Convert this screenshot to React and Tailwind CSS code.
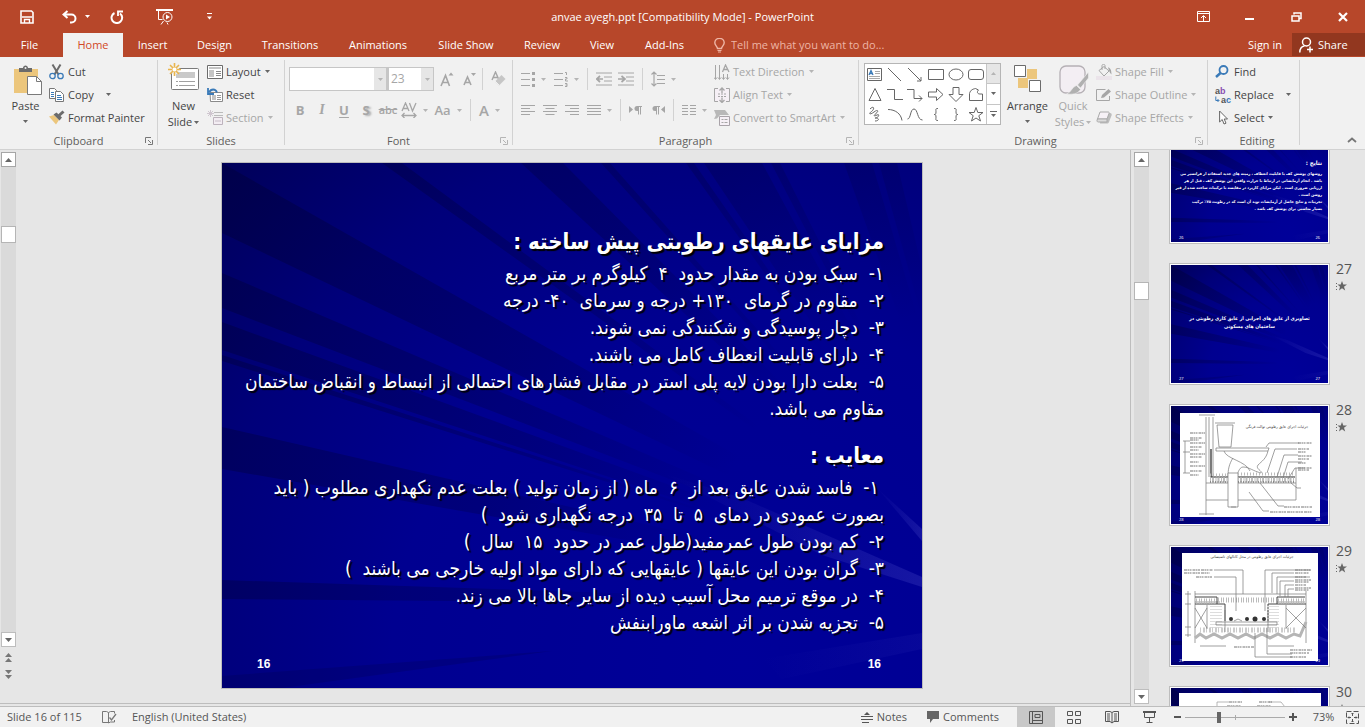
import { useId } from "react";
import { clsx } from "clsx";

const UI_FONT = "font-['Open_Sans','Noto_Sans',sans-serif]";
const FA_FONT = "font-['DejaVu_Sans_Condensed','DejaVu_Sans',sans-serif]";

function Svg({ w, h, className, children }) {
  return (
    <svg width={w} height={h} viewBox={`0 0 ${w} ${h}`} fill="none" stroke="currentColor" aria-hidden="true" className={clsx("shrink-0", className)}>
      {children}
    </svg>
  );
}

function Caret({ className }) {
  return (
    <Svg w={5} h={3} className={className}>
      <path d="M0 0h5L2.5 3z" fill="currentColor" stroke="none" />
    </Svg>
  );
}

/* ---------- title bar icons ---------- */

const SaveIcon = () => (
  <Svg w={14} h={14}>
    <path d="M1 1h10.5L13 2.500V13H1z" strokeWidth="1.600" />
    <path d="M2 7h10M4.500 13v-3.500h5V13" strokeWidth="1.400" />
  </Svg>
);
const UndoIcon = () => (
  <Svg w={15} h={14}>
    <path d="M5.500 1L1.500 4.500l4 3.500M2 4.500h7.500a4 4 0 0 1 0 8H8" strokeWidth="2" />
  </Svg>
);
const RedoIcon = () => (
  <Svg w={14} h={14}>
    <path d="M4.500 3A5.300 5.300 0 1 0 10 3.500" strokeWidth="2" />
    <path d="M8 6V1.500h5" strokeWidth="1.800" />
  </Svg>
);
const SlideshowIcon = () => (
  <Svg w={17} h={16}>
    <path d="M0 1h17" strokeWidth="2" />
    <path d="M2.500 2v8.500h4M5 15.500l2.500-3.500M12 15.500l-1-2" />
    <circle cx="11.500" cy="8" r="4.500" />
    <path d="M10 5.500v5L14 8z" fill="currentColor" stroke="none" />
  </Svg>
);
const CustomizeIcon = () => (
  <Svg w={5} h={7}>
    <path d="M0 .5h5" />
    <path d="M0 3.500h5L2.500 6.500z" fill="currentColor" stroke="none" />
  </Svg>
);
const RibbonOptionsIcon = () => (
  <Svg w={13} h={11}>
    <path d="M.5 .5h12v10H.5zM1 2.500h11M6.500 10V5M4 7l2.500-2.500L9 7" />
  </Svg>
);
const MinimizeIcon = () => (
  <Svg w={9} h={10}>
    <path d="M0 7h9" strokeWidth="2" />
  </Svg>
);
const RestoreIcon = () => (
  <Svg w={11} h={10}>
    <path d="M3 2.500V1h7v5.500H8.500M1 4h7v5H1z" strokeWidth="1.500" />
  </Svg>
);
const CloseIcon = () => (
  <Svg w={10} h={10}>
    <path d="M1 1l8 8M9 1L1 9" strokeWidth="2.200" />
  </Svg>
);
const BulbIcon = () => (
  <Svg w={11} h={15}>
    <path d="M3.500 10.500c0-2-2.700-3-2.700-5.700a4.700 4.500 0 0 1 9.400 0c0 2.700-2.700 3.700-2.700 5.700z" strokeWidth="1.400" />
    <path d="M3.500 12.500h4M4 14h3" strokeWidth="1.200" />
  </Svg>
);
const PersonIcon = () => (
  <Svg w={15} h={16}>
    <circle cx="7.500" cy="5" r="4" strokeWidth="1.500" />
    <path d="M.8 15.500c0-3.500 1.700-6 4.700-6.500M11 9.500v6M8 12.500h6" strokeWidth="1.500" />
  </Svg>
);

/* ---------- clipboard and slides icons ---------- */

const PasteIcon = () => (
  <Svg w={29} h={31}>
    <path d="M1 4h24v24H1z" fill="#ecc67c" stroke="none" />
    <path d="M6 7V3h4c0-3.500 5-3.500 5 0h4v4z" fill="#6b6b6b" stroke="none" />
    <circle cx="12.500" cy="3" r="1" fill="#f1f1f1" stroke="none" />
    <path d="M14.500 11.500h9l5 5v13h-14z" fill="#fff" stroke="#7a7a7a" />
    <path d="M23.500 11.500v5h5" stroke="#7a7a7a" />
  </Svg>
);
const CutIcon = () => (
  <Svg w={15} h={16}>
    <path d="M3.500 .5l6 10M11.500 .5l-6 10" stroke="#6b6b6b" strokeWidth="2" />
    <circle cx="3.500" cy="12" r="2.700" stroke="#3a7ab8" strokeWidth="1.300" />
    <circle cx="11.500" cy="12" r="2.700" stroke="#3a7ab8" strokeWidth="1.300" />
  </Svg>
);
const CopyIcon = () => (
  <Svg w={15} h={14}>
    <path d="M.5 .5h5l2 2v8h-7z" fill="#fff" stroke="#777" />
    <path d="M2 4.500h3M2 6.500h3M2 8.500h3" stroke="#3a7ab8" />
    <path d="M6.500 3.500h5l3 3v7h-8z" fill="#fff" stroke="#777" />
    <path d="M8 7.500h4M8 9.500h5M8 11.500h5" stroke="#3a7ab8" />
  </Svg>
);
const PainterIcon = () => (
  <Svg w={16} h={15}>
    <path d="M0 6.500l5-1.500 5 5-3 4.500z" fill="#ecc67c" stroke="none" />
    <path d="M4.500 4.500l3-2 5.500 5-2.500 3z" fill="#6b6b6b" stroke="none" />
    <path d="M10 5.500l4.500-4" stroke="#6b6b6b" strokeWidth="3" />
  </Svg>
);
const NewSlideIcon = () => (
  <Svg w={31} h={28}>
    <rect x="3.500" y="5.500" width="27" height="21" rx="1" fill="#fff" stroke="#7a7a7a" />
    <path d="M8 9h19v6H8z" fill="#c9c9c9" stroke="none" />
    <path d="M8 18.500h2M11 18.500h16M8 22.500h2M11 22.500h16" stroke="#a0a0a0" />
    <circle cx="6.500" cy="6.500" r="5" fill="#f1f1f1" stroke="none" />
    <path d="M6.500 0v13M0 6.500h13M2 2l9 9M11 2l-9 9" stroke="#e9b54d" strokeWidth="1.600" />
    <circle cx="6.500" cy="6.500" r="2" fill="#fff" stroke="none" />
  </Svg>
);
const LayoutIcon = () => (
  <Svg w={16} h={14}>
    <path d="M.5 .5h15v13H.5z" fill="#fff" stroke="#6b6b6b" />
    <path d="M2 2h12v2H2zM2 5h5v7H2z" fill="#c4c4c4" stroke="none" />
    <path d="M9 6.500h5M9 8.500h5M9 10.500h5" stroke="#888" />
  </Svg>
);
const ResetIcon = () => (
  <Svg w={16} h={14}>
    <path d="M3 4.500h12.500v9h-12z" fill="#fff" stroke="#8a8a8a" />
    <path d="M5 7h4v5H5z" fill="#c4c4c4" stroke="none" />
    <path d="M10 7.500h4M10 9.500h4M10 11.500h4" stroke="#999" />
    <path d="M10 4.500C8.500 .5 4 .5 2 4.500M1 0v6h6" stroke="#3a7ab8" strokeWidth="1.800" />
  </Svg>
);
const SectionIcon = () => (
  <Svg w={16} h={16}>
    <path d="M3.500 0v7M0 3.500h7M1 1l5 5M6 1L1 6" stroke="#cfc6cf" />
    <path d="M7 2.500h9M7 5.500h9" stroke="#bbb" />
    <path d="M6.500 7.500h9v7h-9z" fill="#f3edf3" stroke="#bdb3bd" />
    <path d="M8 11h6" stroke="#c7bdc7" />
  </Svg>
);

/* ---------- font and paragraph icons, all disabled ---------- */

const GrowFontIcon = () => (
  <Svg w={14} h={15}>
    <path d="M1 14L5.500 3.500 9.500 14M2.500 10.500h6" strokeWidth="1.600" />
    <path d="M8.500 3.500h5L11 .5z" fill="currentColor" stroke="none" />
  </Svg>
);
const ShrinkFontIcon = () => (
  <Svg w={13} h={14}>
    <path d="M1 13L4.500 5 8 13M2 10.500h5" strokeWidth="1.600" />
    <path d="M8 1h5l-2.500 3z" fill="currentColor" stroke="none" />
  </Svg>
);
const ClearFormatIcon = () => (
  <Svg w={15} h={16}>
    <path d="M1 9L4.500 1 8 9M2.500 6.500h4" strokeWidth="1.400" />
    <path d="M4 10.500L10.500 4l4 4L8 14.500z" fill="#c6c6c6" stroke="none" />
    <path d="M4 10l4.500 4.500" stroke="#f1f1f1" />
  </Svg>
);
const SpacingIcon = () => (
  <Svg w={16} h={16}>
    <path d="M1 9L4.500 1 8 9M2.500 6.500h4M8.500 1L11.500 9 15 1M.8 13.500h14.400M3.500 11L1 13.500 3.500 16M12.500 11l2.500 2.500-2.500 2.500" strokeWidth="1.300" />
  </Svg>
);
const BulletsIcon = () => (
  <Svg w={14} h={16}>
    <path d="M0 2.500h9M0 8.500h9M0 14.500h9" />
    <path d="M11 1h3v3h-3zM11 7h3v3h-3zM11 13h3v3h-3z" fill="currentColor" stroke="none" />
  </Svg>
);
const NumberingIcon = () => (
  <Svg w={14} h={16}>
    <path d="M0 2.500h9M0 8.500h9M0 14.500h9M11 1.500h1.500V4M11 6.500h2v1.500h-1.500v2H14M11 12.500h2v3h-2M11.500 14H13" />
  </Svg>
);
const OutdentIcon = ({ flip }) => (
  <Svg w={16} h={14}>
    <path d="M0 1h16M0 13h16M8 5h8M8 9h8" />
    <path d={flip ? "M0 7h6M3.500 4L7 7l-3.500 3" : "M7 7H1M4 4L.7 7 4 10"} strokeWidth="1.700" />
  </Svg>
);
const LineSpacingIcon = () => (
  <Svg w={14} h={16}>
    <path d="M6 4.500h8M6 8.500h8M6 12.500h8M3 1v14M.5 3.500L3 1l2.500 2.500M.5 12.500L3 15l2.500-2.500" strokeWidth="1.200" />
  </Svg>
);
const ALIGN_PATHS = {
  left: "M0 .5h14M0 3.500h9M0 6.500h14M0 9.500h9",
  center: "M0 .5h14M2.500 3.500h9M0 6.500h14M2.500 9.500h9",
  right: "M0 .5h14M5 3.500h9M0 6.500h14M5 9.500h9",
  justify: "M0 .5h14M0 3.500h14M0 6.500h14M0 9.500h14",
  columns: "M0 .5h6M8 .5h6M0 3.500h6M8 3.500h6M0 6.500h6M8 6.500h6M0 9.500h6M8 9.500h6",
};
const AlignIcon = ({ type }) => (
  <Svg w={14} h={10}>
    <path d={ALIGN_PATHS[type]} />
  </Svg>
);
const DirectionIcon = ({ rtl }) => (
  <Svg w={13} h={9}>
    <path d={rtl ? "M13 0v7L9 3.500z" : "M0 0v7l4-3.500z"} fill="currentColor" stroke="none" />
    <g transform={rtl ? "translate(-5 0)" : undefined}>
      <path d="M9.500 .5v8M11.500 .5v8M8 .5h5" />
      <path d="M9.500 0H8a2 2 0 0 0 0 5h1.500z" fill="currentColor" stroke="none" />
    </g>
  </Svg>
);
const TextDirectionIcon = () => (
  <Svg w={16} h={16}>
    <path d="M1.500 1v14M5.500 1v14M9.500 10v5M13.500 10v5M0 13.500L1.500 15.500 3 13.500M4 13.500l1.500 2 1.500-2M8 13.500l1.500 2 1.500-2M12 13.500l1.500 2 1.500-2" />
    <path d="M8.500 8L11.500 1l3.500 7M9.500 5.500h4" strokeWidth="1.300" />
  </Svg>
);
const AlignTextIcon = () => (
  <Svg w={16} h={16}>
    <path d="M.5 1.500h15v13H.5z" fill="#f6f0f6" stroke="none" />
    <path d="M4 1.500H.5v13H4M12 1.500h3.500v13H12" />
    <path d="M4 7h8M4 9.500h8" strokeDasharray="2 1" />
    <path d="M8 1v5M5.500 3.500L8 1l2.500 2.500M8 10.500v5M5.500 13L8 15.500l2.500-2.500" strokeWidth="1.300" />
  </Svg>
);
const SmartArtIcon = () => (
  <Svg w={16} h={16}>
    <path d="M0 0h11l4 5H6L3 8.500 0 9l2-4z" fill="#b8b8b8" stroke="none" />
    <path d="M5.500 6.500h10v9h-10z" fill="#f6f0f6" stroke="#a9a3a9" />
    <path d="M7.500 9.500h2M10.500 9.500h3M7.500 12.500h2M10.500 12.500h3" />
  </Svg>
);

/* ---------- drawing and editing icons ---------- */

const ArrangeIcon = () => (
  <Svg w={28} h={27}>
    <path d="M13 4h10v10H13zM4 13h10v10H4z" fill="#ecc67c" stroke="none" />
    <path d="M.5 .5h11v11H.5zM15.500 15.500h11v11h-11z" fill="#fff" stroke="#6b6b6b" />
  </Svg>
);
const QuickStylesIcon = () => (
  <Svg w={30} h={31}>
    <rect x="1" y="1" width="25" height="27" rx="6" fill="#f3eef3" stroke="#b5b0b5" strokeWidth="1.300" />
    <path d="M29.500 7v6l-8 10-3-3z" fill="#b0b0b0" stroke="#f1f1f1" strokeWidth=".6" />
    <path d="M17.500 20.500l4 4c-3 5-9 5-14 4.500 5-1.500 5-7 10-8.500z" fill="#b0b0b0" stroke="#f1f1f1" strokeWidth=".6" />
  </Svg>
);
const FillIcon = () => (
  <Svg w={16} h={16}>
    <path d="M0 12h16v4H0z" fill="#ebe4ea" stroke="none" />
    <path d="M3 6.500l5-4 5 4.500-5 5zM6 6V1.500C6 0 9 0 9 1.500V5" />
    <path d="M12 3.500c2 0 3.500 2 3.500 7-1.500-1-2-3-2.500-4z" fill="currentColor" stroke="none" />
  </Svg>
);
const OutlineIcon = () => (
  <Svg w={16} h={12}>
    <path d="M13.500 7v4.500H.5V.5h9" />
    <path d="M5 9l1-3 6.500-6 2.500 2.500L8 8.500z" fill="currentColor" stroke="none" />
  </Svg>
);
const EffectsIcon = () => (
  <Svg w={16} h={13}>
    <path d="M5 2h9c1.500 0 2 1 1.500 2.500L13 11c-.5 1-1 1.500-2 1.500H4z" fill="#bcbcbc" stroke="none" />
    <path d="M4 1h8c1 0 1.500.5 1 1.500L11 8H1.500z" fill="#f6f1f6" stroke="#a9a9a9" />
    <path d="M1.500 8H11v3H2.500C1 11 .5 10 1.500 8z" fill="#dcdcdc" stroke="#a9a9a9" />
  </Svg>
);
const FindIcon = () => (
  <Svg w={14} h={13}>
    <circle cx="8.500" cy="5" r="4" stroke="#3a7ab8" strokeWidth="1.800" />
    <path d="M5.500 8L1 12" stroke="#3a7ab8" strokeWidth="2.500" />
  </Svg>
);
const ReplaceIcon = () => (
  <Svg w={17} h={18} className="overflow-visible">
    <g stroke="none" className="font-['Liberation_Sans',sans-serif] text-[9px] font-bold" fill="#555">
      <text x="0" y="8">a<tspan fill="#8a4fb0">b</tspan></text>
      <text x="6" y="17">a<tspan fill="#3a7ab8">c</tspan></text>
    </g>
    <path d="M.8 10.500v4h3M2.500 13l1.500 1.500L2.500 16" stroke="#3a7ab8" />
  </Svg>
);
const SelectIcon = () => (
  <Svg w={9} h={15}>
    <path d="M.6 1v11l2.600-2.500L5 14l2-.8-1.800-4.200h3.300z" fill="#fff" stroke="#666" />
  </Svg>
);

const SHAPES = [
  { name: "Text box", el: <><path d="M.5 2.500h14v12H.5z" fill="#fff" /><path d="M2 9L4 4.500 6 9M2.500 7.500h3" stroke="#3a7ab8" strokeWidth="1.300" /><path d="M8 5.500h5M8 7.500h5M2 10.500h11M2 12.500h11" stroke="#aaa" /></> },
  { name: "Line", el: <path d="M1 2l13 13" /> },
  { name: "Arrow", el: <path d="M1 2l13 13M14 11v4h-4" /> },
  { name: "Rectangle", el: <path d="M.5 3.500h15v10H.5z" /> },
  { name: "Oval", el: <ellipse cx="8" cy="8.500" rx="7" ry="5.500" /> },
  { name: "Rounded rectangle", el: <rect x=".5" y="3.500" width="15" height="10" rx="2.500" /> },
  { name: "Triangle", el: <path d="M8 2.500L14 14.500H2z" /> },
  { name: "Elbow connector", el: <path d="M0 3.500h7.500v10H16" /> },
  { name: "Elbow arrow", el: <path d="M0 3.500h7v9h8M12 9.500l3 3-3 3" /> },
  { name: "Right arrow", el: <path d="M.5 6h8V2.500L15 8.500l-6.500 6V11h-8z" /> },
  { name: "Down arrow", el: <path d="M5 1.500h6v7h4L8 15.500 1 8.500h4z" /> },
  { name: "Freeform", el: <path d="M1.500 14.500v-7c1-4 4-4.500 6-5l3 1.500c-2 2-1 4 1.500 4h2.500v6.500z" /> },
  { name: "Scribble", el: <path d="M3 3c4-4 5 0 1.500 2.500S3 9 7 6s5-1 2 1.500-2 3 1 1.500 1.500 2-.5 3-2-1 .5 0 1.500 3-2 3" /> },
  { name: "Arc", el: <path d="M1 3.500c7 0 13 4 14 11" /> },
  { name: "Curve", el: <path d="M.5 13C4 13 3 3 7 3s3 11 8.500 11" /> },
  { name: "Left brace", el: <path d="M10 2.500c-3 0-2 1-2 3.500s-1 2.500-2 2.500c1 0 2 0 2 2.500s-1 3.500 2 3.500" /> },
  { name: "Right brace", el: <path d="M6 2.500c3 0 2 1 2 3.500s1 2.500 2 2.500c-1 0-2 0-2 2.500s1 3.500-2 3.500" /> },
  { name: "Star", el: <path d="M8 1.500l1.800 5H15l-4.200 3.200 1.700 5.300L8 12l-4.500 3 1.700-5.300L1 6.500h5.200z" /> },
];

/* ---------- ribbon parts ---------- */

function Group({ label, launcher, muted, className, children }) {
  return (
    <section aria-label={label} className={clsx("mt-[3px] mb-1 flex shrink-0 flex-col border-r border-[#d2d2d2]", className)}>
      <div className="flex h-[73px] shrink-0">{children}</div>
      <div className="flex h-4 items-center leading-4">
        <span className="w-3" />
        <span className="flex-1 text-center text-[#605e5c]">{label}</span>
        <span className="flex w-3 items-center">
          {launcher && (
            <button aria-label={`${label} settings`} className={muted ? "text-[#b5b5b5]" : "text-[#777]"}>
              <Svg w={8} h={8}>
                <path d="M.5 6V.5H6M3 3l3 3M7.500 3v4.500H3" />
              </Svg>
            </button>
          )}
        </span>
      </div>
    </section>
  );
}

function SmallButton({ icon, label, caret, wide, disabled }) {
  return (
    <button disabled={disabled} className={clsx("flex h-[23px] items-center whitespace-nowrap", disabled ? "text-[#a6a6a6]" : "text-[#444]")}>
      <span className="flex w-[19px] items-center">{icon}</span>
      {label}
      {caret && <Caret className={clsx(wide ? "ml-3" : "ml-1", disabled ? "text-[#b5b5b5]" : "text-[#666]")} />}
    </button>
  );
}

function IconButton({ label, className, caret, children }) {
  return (
    <button disabled aria-label={label} className={clsx("flex h-6 items-center justify-center text-[#a6a6a6]", className)}>
      {children}
      {caret && <Caret className="ml-1.5 text-[#b5b5b5]" />}
    </button>
  );
}

const Divider = ({ className }) => <span className={clsx("h-[22px] w-px bg-[#d2d2d2]", className)} />;

function Combo({ label, value, className }) {
  return (
    <div className={clsx("flex h-6 border border-[#c6c6c6] bg-white text-[#a6a6a6]", className)}>
      <select aria-label={label} disabled defaultValue={value} className="min-w-0 flex-1 appearance-none bg-white pl-0.5 text-[12px] opacity-100 outline-none">
        <option value={value}>{value}</option>
      </select>
      <span className="flex w-3 items-center justify-center bg-[#e6e6e6] text-[#b5b5b5]">
        <Caret />
      </span>
    </div>
  );
}

function ShapeGallery() {
  return (
    <div className="mt-[3px] flex h-[62px] w-[137px] border border-[#b5b5b5] bg-white">
      <div className="grid flex-1 grid-cols-6 grid-rows-3 text-[#666]">
        {SHAPES.map(s => (
          <button key={s.name} aria-label={s.name} className="flex items-center justify-center">
            <Svg w={16} h={16}>{s.el}</Svg>
          </button>
        ))}
      </div>
      <div className="flex w-3.5 flex-col divide-y divide-[#c6c6c6] border-l border-[#c6c6c6]">
        <button aria-label="Previous shapes" className="flex flex-1 items-center justify-center bg-[#e6e6e6] text-[#b5b5b5]">
          <Caret className="rotate-180" />
        </button>
        <button aria-label="Next shapes" className="flex flex-1 items-center justify-center text-[#666]">
          <Caret />
        </button>
        <button aria-label="More shapes" className="flex flex-1 items-center justify-center text-[#666]">
          <Svg w={7} h={7}>
            <path d="M0 .5h7" />
            <path d="M1 3h5L3.500 6z" fill="currentColor" stroke="none" />
          </Svg>
        </button>
      </div>
    </div>
  );
}

function Ribbon() {
  return (
    <div className="flex h-[93px] shrink-0 border-b border-[#d2d2d2] bg-[#f1f1f1]">
      <Group label="Clipboard" launcher className="w-[158px]">
        <button className="ml-0.5 flex w-[47px] flex-col items-center justify-start pt-[5px] text-[#444]">
          <span className="ml-1"><PasteIcon /></span>
          <span className="mt-0.5 leading-4">Paste</span>
          <Caret className="mt-1.5 text-[#666]" />
        </button>
        <div className="flex flex-col">
          <SmallButton icon={<CutIcon />} label="Cut" />
          <SmallButton icon={<CopyIcon />} label="Copy" caret wide />
          <SmallButton icon={<PainterIcon />} label="Format Painter" />
        </div>
      </Group>

      <Group label="Slides" className="w-[127px]">
        <button className="ml-0.5 flex w-[47px] flex-col items-center justify-start pt-[3px] text-[#444]">
          <NewSlideIcon />
          <span className="mt-[7px] leading-4">New</span>
          <span className="flex items-center gap-0.5 leading-4">Slide<Caret className="text-[#666]" /></span>
        </button>
        <div className="flex flex-col">
          <SmallButton icon={<LayoutIcon />} label="Layout" caret />
          <SmallButton icon={<ResetIcon />} label="Reset" />
          <SmallButton icon={<SectionIcon />} label="Section" caret disabled />
        </div>
      </Group>

      <Group label="Font" launcher muted className="w-[228px]">
        <div className="flex flex-col gap-[7px] pt-[7px] pl-1">
          <div className="flex items-center">
            <Combo label="Font name" value="" className="w-[98px]" />
            <Combo label="Font size" value="23" className="w-[47px] border-l-2" />
            <IconButton label="Increase font size" className="ml-0.5 w-[22px]"><GrowFontIcon /></IconButton>
            <IconButton label="Decrease font size" className="w-[22px]"><ShrinkFontIcon /></IconButton>
            <Divider className="mx-0.5" />
            <IconButton label="Clear formatting" className="ml-0.5 w-[22px]"><ClearFormatIcon /></IconButton>
          </div>
          <div className="flex items-center">
            <IconButton label="Bold" className="w-[22px] text-[13px] font-bold">B</IconButton>
            <IconButton label="Italic" className="w-[22px] font-['Liberation_Serif',serif] text-[14px] font-bold italic">I</IconButton>
            <IconButton label="Underline" className="w-[22px] text-[13px] font-bold underline underline-offset-2">U</IconButton>
            <IconButton label="Shadow" className="w-[22px] text-[13px] font-bold [text-shadow:2px_1px_2px_#aaa]">S</IconButton>
            <IconButton label="Strikethrough" className="w-[22px] font-semibold line-through">abc</IconButton>
            <IconButton label="Character spacing" caret className="w-[31px]"><SpacingIcon /></IconButton>
            <IconButton label="Change case" caret className="w-9 text-[13px] font-semibold">Aa</IconButton>
            <Divider className="mx-1" />
            <IconButton label="Font color" caret className="w-[29px] text-[15px] font-semibold">A</IconButton>
          </div>
        </div>
      </Group>

      <Group label="Paragraph" launcher muted className="w-[346px]">
        <div className="flex w-[201px] flex-col gap-[7px] pt-[7px] pl-2">
          <div className="flex items-center">
            <IconButton label="Bullets" caret><BulletsIcon /></IconButton>
            <IconButton label="Numbering" caret className="ml-2"><NumberingIcon /></IconButton>
            <Divider className="mx-2" />
            <IconButton label="Decrease indent"><OutdentIcon /></IconButton>
            <IconButton label="Increase indent" className="ml-1.5"><OutdentIcon flip /></IconButton>
            <Divider className="mx-2" />
            <IconButton label="Line spacing" caret><LineSpacingIcon /></IconButton>
          </div>
          <div className="flex items-center">
            <IconButton label="Align left"><AlignIcon type="left" /></IconButton>
            <IconButton label="Center" className="ml-2"><AlignIcon type="center" /></IconButton>
            <IconButton label="Align right" className="ml-2"><AlignIcon type="right" /></IconButton>
            <IconButton label="Justify" caret className="ml-2"><AlignIcon type="justify" /></IconButton>
            <Divider className="mx-2" />
            <IconButton label="Left to right"><DirectionIcon /></IconButton>
            <IconButton label="Right to left" className="ml-2.5"><DirectionIcon rtl /></IconButton>
            <Divider className="mx-2" />
            <IconButton label="Columns" caret><AlignIcon type="columns" /></IconButton>
          </div>
        </div>
        <div className="flex flex-col">
          <SmallButton icon={<TextDirectionIcon />} label="Text Direction" caret disabled />
          <SmallButton icon={<AlignTextIcon />} label="Align Text" caret disabled />
          <SmallButton icon={<SmartArtIcon />} label="Convert to SmartArt" caret disabled />
        </div>
      </Group>

      <Group label="Drawing" launcher muted className="w-[349px] pl-[5px]">
        <ShapeGallery />
        <button className="ml-1 flex w-[45px] flex-col items-center justify-start pt-[5px] text-[#444]">
          <ArrangeIcon />
          <span className="mt-1.5 leading-4">Arrange</span>
          <Caret className="mt-1.5 text-[#666]" />
        </button>
        <button disabled className="flex w-[46px] flex-col items-center justify-start pt-[5px] text-[#a6a6a6]">
          <span className="ml-0.5"><QuickStylesIcon /></span>
          <span className="mt-0.5 leading-4">Quick</span>
          <span className="flex items-center gap-0.5 leading-4">Styles<Caret className="text-[#b5b5b5]" /></span>
        </button>
        <div className="flex flex-col">
          <SmallButton icon={<FillIcon />} label="Shape Fill" caret disabled />
          <SmallButton icon={<OutlineIcon />} label="Shape Outline" caret disabled />
          <SmallButton icon={<EffectsIcon />} label="Shape Effects" caret disabled />
        </div>
      </Group>

      <Group label="Editing" className="w-[92px] pl-[7px]">
        <div className="flex flex-col">
          <SmallButton icon={<FindIcon />} label="Find" />
          <SmallButton icon={<ReplaceIcon />} label="Replace" caret wide />
          <SmallButton icon={<span className="ml-1"><SelectIcon /></span>} label="Select" caret />
        </div>
      </Group>

      <button aria-label="Collapse the ribbon" className="mr-2 ml-auto self-end pb-1.5 text-[#777]">
        <Svg w={10} h={6}>
          <path d="M1 5l4-3.500L9 5" strokeWidth="1.800" />
        </Svg>
      </button>
    </div>
  );
}

const TABS = [
  { label: "File", width: "w-[63px] pr-1" },
  { label: "Home", width: "w-[60px]" },
  { label: "Insert", width: "w-[59px]" },
  { label: "Design", width: "w-[65px]" },
  { label: "Transitions", width: "w-[86px]" },
  { label: "Animations", width: "w-[90px]" },
  { label: "Slide Show", width: "w-[86px]" },
  { label: "Review", width: "w-[66px]" },
  { label: "View", width: "w-[54px]" },
  { label: "Add-Ins", width: "w-[71px]" },
];

function Header() {
  return (
    <header className="shrink-0 bg-[#b7472a] text-white">
      <div className="grid h-[33px] grid-cols-[1fr_auto_1fr] items-center">
        <div className="flex items-center pl-5">
          <button aria-label="Save"><SaveIcon /></button>
          <button aria-label="Undo" className="ml-7 flex items-center gap-2"><UndoIcon /><Caret /></button>
          <button aria-label="Redo" className="ml-5"><RedoIcon /></button>
          <button aria-label="Start from beginning" className="ml-8"><SlideshowIcon /></button>
          <button aria-label="Customize toolbar" className="ml-[34px]"><CustomizeIcon /></button>
        </div>
        <h1>anvae ayegh.ppt [Compatibility Mode] - PowerPoint</h1>
        <div className="flex items-center justify-end pr-[17px]">
          <button aria-label="Ribbon display options" className="mr-[35px]"><RibbonOptionsIcon /></button>
          <button aria-label="Minimize" className="mr-[37px]"><MinimizeIcon /></button>
          <button aria-label="Restore" className="mr-9"><RestoreIcon /></button>
          <button aria-label="Close"><CloseIcon /></button>
        </div>
      </div>
      <nav className="flex h-6 items-stretch">
        {TABS.map(t => (
          <button key={t.label} className={clsx("shrink-0 whitespace-nowrap", t.width, t.label === "Home" && "bg-[#f1f1f1] text-[#d24726]")}>
            {t.label}
          </button>
        ))}
        <label htmlFor="tell-me" className="ml-3.5 flex items-center text-[#eeb5a5]"><BulbIcon /></label>
        <input id="tell-me" aria-label="Tell me" placeholder="Tell me what you want to do..." className="ml-1.5 w-[180px] bg-transparent outline-none placeholder:text-[#eeb5a5]" />
        <button className="mr-2.5 ml-auto">Sign in</button>
        <button className="mb-px flex w-[73px] items-center gap-1 bg-[#92371f] pl-[7px]"><PersonIcon />Share</button>
      </nav>
    </header>
  );
}

/* ---------- slides ---------- */

// every ray runs from the vanishing point right of the slide to one of its edges
const RAYS = [
  "0,110 0,145", "0,159 0,187", "0,192 0,198", "0,264 0,306", "0,417 0,436",
  "0,0 0,70", "160,0 180,0", "299,0 341,0", "379,0 388,0",
  "464,0 472,0", "482,0 540,0", "549,0 558,0", "622,0 650,0", "657,0 675,0",
];

function SlideBackdrop() {
  const id = useId();
  return (
    <svg viewBox="0 0 700 525" preserveAspectRatio="none" aria-hidden="true" className="absolute inset-0 h-full w-full">
      <defs>
        <radialGradient id={`${id}base`} gradientUnits="userSpaceOnUse" cx="520" cy="500" r="780">
          <stop offset="0" stopColor="#000099" />
          <stop offset=".45" stopColor="#000090" />
          <stop offset=".7" stopColor="#00007a" />
          <stop offset="1" stopColor="#00004e" />
        </radialGradient>
        <radialGradient id={`${id}ray`} gradientUnits="userSpaceOnUse" cx="780" cy="443" r="860">
          <stop offset=".35" stopColor="#000030" stopOpacity="0" />
          <stop offset=".6" stopColor="#000030" stopOpacity=".22" />
          <stop offset="1" stopColor="#000030" stopOpacity=".36" />
        </radialGradient>
        <linearGradient id={`${id}shine`} x1="0" x2="1">
          <stop offset="0" stopColor="#4040c0" stopOpacity="0" />
          <stop offset="1" stopColor="#4040c0" stopOpacity=".35" />
        </linearGradient>
      </defs>
      <rect width="700" height="525" fill={`url(#${id}base)`} />
      {RAYS.map(r => <polygon key={r} points={`780,443 ${r}`} fill={`url(#${id}ray)`} />)}
      <polygon points="0,513 0,525 60,525 330,488" fill="#000040" opacity=".2" />
      <polygon points="440,310 520,335 700,414 700,424 600,392" fill={`url(#${id}shine)`} />
      <polygon points="655,325 700,378 700,366" fill={`url(#${id}shine)`} />
      <polygon points="540,496 700,470 700,486 560,516" fill={`url(#${id}shine)`} opacity=".35" />
    </svg>
  );
}

const PROS = [
  "۱-  سبک بودن به مقدار حدود  ۴  کیلوگرم بر متر مربع",
  "۲-  مقاوم در گرمای  ۱۳۰+ درجه و سرمای  ۴۰- درجه",
  "۳-  دچار پوسیدگی و شکنندگی نمی شوند.",
  "۴-  دارای قابلیت انعطاف کامل می باشند.",
  "۵-  بعلت دارا بودن لایه پلی استر در مقابل فشارهای احتمالی از انبساط و انقباض ساختمان",
  "مقاوم می باشد.",
];

const CONS = [
  " ۱-  فاسد شدن عایق بعد از  ۶  ماه ( از زمان تولید ) بعلت عدم نکهداری مطلوب ( باید",
  "بصورت عمودی در دمای  ۵  تا  ۳۵  درجه نگهداری شود  )",
  "۲-  کم بودن طول عمرمفید(طول عمر در حدود  ۱۵  سال  )",
  "۳-  گران بودن این عایقها ( عایقهایی که دارای مواد اولیه خارجی می باشند  )",
  "۴-  در موقع ترمیم محل آسیب دیده از سایر جاها بالا می زند.",
  "۵-  تجزیه شدن بر اثر اشعه ماورابنفش",
];

function TextBlock({ title, lines }) {
  return (
    <section>
      <h2 className="text-[22px] leading-9 font-bold">{title}</h2>
      {lines.map(line => (
        <p key={line} className="text-[19px] leading-[27px] whitespace-pre">{line}</p>
      ))}
    </section>
  );
}

function MainSlide() {
  return (
    <article className="relative aspect-4/3 h-full overflow-hidden outline outline-[#bdbdbd]">
      <SlideBackdrop />
      <div className="relative flex h-full flex-col justify-between text-white">
        <div dir="rtl" lang="fa" className={clsx("flex flex-col gap-4 pt-[61px] pr-[38px] [text-shadow:2px_2px_1px_#000]", FA_FONT)}>
          <TextBlock title="مزایای عایقهای رطوبتی پیش ساخته :" lines={PROS} />
          <TextBlock title="معایب :" lines={CONS} />
        </div>
        <div className="flex justify-between px-[35px] pb-4 font-['Liberation_Sans',sans-serif] text-[12px] leading-4 font-bold">
          <span>16</span>
          <span className="mr-1.5">16</span>
        </div>
      </div>
    </article>
  );
}

function Thumb({ number, children }) {
  return (
    <li className="flex h-[122px] shrink-0 gap-1.5">
      <div className="relative w-[161px] shrink-0 overflow-hidden border border-[#bdbdbd] bg-white p-px">
        <div className="relative h-full w-full overflow-hidden text-white">
          <SlideBackdrop />
          {children}
          <div className="absolute inset-x-2 bottom-0.5 flex justify-between text-[4px] leading-[5px]">
            <span>{number}</span>
            <span>{number}</span>
          </div>
        </div>
      </div>
      <div className="-mt-1 flex flex-col text-[#555]">
        <span className="text-[14px] leading-5">{number}</span>
        <Svg w={11} h={10} className="mt-0.5">
          <path d="M6 0l1.300 3.500H11L8 5.800l1.200 3.700L6 7.300 3 9.500l1-3.700L1.500 3.500h3.200z" fill="#666" stroke="none" />
          <path d="M0 2.500h1M0 5.500h1M0 8.500h1" stroke="#666" />
        </Svg>
      </div>
    </li>
  );
}

// stands of small label lines beside a technical drawing
function Labels({ x, ys, w }) {
  return ys.map((y, i) => (
    <path key={y} d={`M${x} ${y}h${w - (i % 3) * 3}`} stroke="#777" strokeWidth="1.200" strokeDasharray="3 .5 1.500 .5 2 1" />
  ));
}

function ToiletDrawing() {
  return (
    <svg viewBox="0 0 140 104" fill="none" stroke="#777" strokeWidth=".7" className="absolute top-[7px] left-[9px] h-[104px] w-[140px] bg-white" role="img" aria-label="جزئیات توالت فرنگی">
      <text x="97" y="15" textAnchor="middle" direction="rtl" stroke="none" fill="#333" className={clsx("text-[4px]", FA_FONT)}>جزئیات اجرای عایق رطوبتی توالت فرنگی</text>
      <path d="M26 4v98M29 4v60M33 4v61M19 2h16M19 101h15M26 70h90M26 87h90M116 55v32" />
      <path d="M31 36v28h17M57 64h58" stroke="#222" strokeWidth="1.200" />
      <path d="M37 12h16l-2 22H39zM35 10h20M36 38h52l1-3H36zM44 38c2 8 22 10 26 20M88 38c-2 8-6 10-10 14-3 4 5 6 3 8-8-2-12-6-18-6-4 0-6 8-6 10M53 45c-4 6-5 12-5 18" />
      <path d="M48 60h10v34H48zM51 94h5" fill="#fff" />
      <path d="M30 67h18M58 67h57" stroke="#bbb" strokeWidth="5" strokeDasharray="1 1 2 1.500" />
      <path d="M30 69h18M58 69h57" stroke="#777" strokeWidth="1.500" strokeDasharray="1 1.500" />
      <path d="M30 62h18M58 61h57" stroke="#bbb" strokeDasharray="1 2" strokeWidth="3" />
      <path d="M86 34l3-4h30M87 60l8-24h22M97 64l7-22h14M103 65l5-16h14M108 66l7-11h10M80 70l18 23h6M69 79l14 19h6M111 70l6 5h4" />
      <path d="M5 28v32M3 28h7M3 39h7M3 60h7" />
      <Labels x={10} w={15} ys={[20, 25, 27, 30, 34, 37, 41, 44, 49, 53, 58, 62]} />
      <Labels x={118} w={14} ys={[30, 36, 39, 43, 46, 50, 55, 57]} />
      <Labels x={104} w={28} ys={[94]} />
      <Labels x={90} w={42} ys={[99]} />
    </svg>
  );
}

function ChannelDrawing() {
  return (
    <svg viewBox="0 0 136 108" fill="none" stroke="#777" strokeWidth=".7" className="absolute top-1.5 left-[11px] h-[108px] w-[136px] bg-white" role="img" aria-label="جزئیات کانال تاسیسات">
      <text x="70" y="5" textAnchor="middle" direction="rtl" stroke="none" fill="#333" className={clsx("text-[4px]", FA_FONT)}>جزئیات اجرای عایق رطوبتی در محل کانالهای تاسیساتی</text>
      <path d="M13 41h111M13 49h25M95 49h28M13 38v52M124 38v52M6 38v46M3 41h6M3 51h6M3 74h6M3 82h6" />
      <path d="M13 44h22v7M95 51v-7h28M13 51h30v17M124 51H86v17" stroke="#444" strokeWidth="1" />
      <path d="M36 47h58M14 48h20M96 48h27" stroke="#bbb" strokeWidth="5" strokeDasharray="1 2 1 1" />
      <path d="M34 53v22M91 53v22" stroke="#ddd" strokeWidth="12" strokeDasharray="1 2" />
      <path d="M18 77h95" stroke="#ccc" strokeWidth="5" strokeDasharray="1 2 2 1" />
      <path d="M13 85l5-4 6 4 8-4 8 4 8-4 8 4 8-4 8 4 8-4 8 4 8-4 8 4 8-4 6 2 6-14" stroke="#b5b5b5" strokeWidth="3" />
      <path d="M25 52v24M43 57v22M86 57v22M104 52v24M34 69h61v3H34zM13 55l12 20M25 55L13 75M104 55l20 20M124 55l-20 20M52 68l4-2 4 2" />
      <g fill="#333" stroke="none">
        <circle cx="49" cy="66" r="2" /><circle cx="65" cy="66" r="2" /><circle cx="73" cy="66" r="2.500" /><circle cx="82" cy="66" r="2" />
      </g>
      <path d="M32 17h29v24M32 24h22v34M128 17H83v41M112 20H90v20M128 24H95v17M112 28H98v15M112 32h-9v12M112 36h-6v8M73 80v24h37M85 75v26h25M18 93h26M86 93h26" />
      <Labels x={2} w={29} ys={[17, 20]} />
      <Labels x={14} w={17} ys={[24]} />
      <Labels x={113} w={17} ys={[17, 20, 24, 27, 29, 32, 35, 37]} />
      <Labels x={52} w={20} ys={[94]} />
      <Labels x={108} w={22} ys={[97, 100, 104]} />
    </svg>
  );
}

function ThumbnailPane() {
  return (
    <ol className={clsx("-mt-7 flex w-[216px] shrink-0 flex-col gap-[19px] pl-5", UI_FONT)}>
      <Thumb number="26">
        <div dir="rtl" lang="fa" className={clsx("relative pt-[35px] pr-1.5 text-[4px] leading-[7px] font-bold whitespace-nowrap", FA_FONT)}>
          <h3 className="mb-1 text-[6px]">نتایج :</h3>
          <p>روشهای پوشش کف با قابلیت انعطاف ، زمینه های جدید استفاده از فرانسیر می</p>
          <p>باشد . انجام آزمایشاتی در ارتباط با حرارت واقعی این پوشش کف ، قبل از هر</p>
          <p>ارزیابی ضروری است . لیکن مزایای کاربرد در مقایسه با ترکیبات ساخته شده از قیر</p>
          <p>روشن است .</p>
          <p>تجربیات و نتایج حاصل از آزمایشات نوید آن است که در رطوبت ۷۵٪ ترکیب</p>
          <p>بسیار مناسبی برای پوشش کف باشد .</p>
        </div>
      </Thumb>
      <Thumb number="27">
        <p dir="rtl" lang="fa" className={clsx("relative px-3 pt-[49px] text-center text-[5px] leading-2 font-bold whitespace-nowrap", FA_FONT)}>
          تصاویری از عایق های اجرایی از عایق کاری رطوبتی در
          <br />
          ساختمان های مسکونی
        </p>
      </Thumb>
      <Thumb number="28"><ToiletDrawing /></Thumb>
      <Thumb number="29"><ChannelDrawing /></Thumb>
      <Thumb number="30">
        <svg viewBox="0 0 142 108" fill="none" stroke="#999" strokeWidth=".7" className="absolute top-[5px] left-2 h-[108px] w-[142px] bg-white" aria-hidden="true">
          <path d="M38 14V9h12M90 9h12l4 5" />
          <Labels x={50} w={13} ys={[9]} />
          <Labels x={80} w={13} ys={[9]} />
          <Labels x={48} w={14} ys={[13]} />
          <Labels x={78} w={14} ys={[13]} />
        </svg>
      </Thumb>
    </ol>
  );
}

function ScrollBar({ label, spacer, thumb, className }) {
  return (
    <div aria-label={label} className={clsx("flex w-[15px] shrink-0 flex-col bg-[#dadada]", className)}>
      <button aria-label="Scroll up" className="flex h-[15px] items-center justify-center border border-[#a6a6a6] bg-white text-[#666]">
        <Svg w={7} h={4}><path d="M0 4h7L3.500 0z" fill="currentColor" stroke="none" /></Svg>
      </button>
      <div className={spacer} />
      <div className={clsx("border border-[#b5b5b5] bg-white", thumb)} />
      <button aria-label="Scroll down" className="mt-auto flex h-[15px] items-center justify-center border border-[#bdbdbd] bg-white text-[#666]">
        <Svg w={7} h={4}><path d="M0 0h7L3.500 4z" fill="currentColor" stroke="none" /></Svg>
      </button>
    </div>
  );
}

function Workspace() {
  return (
    <div className="flex min-h-0 flex-1 overflow-hidden bg-[#e6e6e6]">
      <div className="flex min-w-0 flex-1 flex-col border-r border-[#bdbdbd]">
        <div className="flex min-h-0 flex-1 border-b border-[#bdbdbd]">
          <div className="flex flex-col pt-0.5 pl-px text-[#777]">
            <ScrollBar label="Slide scroll bar" spacer="h-[59px]" thumb="h-[17px]" className="flex-1" />
            <button aria-label="Previous slide" className="flex justify-center pt-1.5">
              <Svg w={7} h={9}><path d="M0 4h7L3.500 0zM0 9h7L3.500 5z" fill="currentColor" stroke="none" /></Svg>
            </button>
            <button aria-label="Next slide" className="flex justify-center pt-2 pb-6">
              <Svg w={7} h={9}><path d="M0 0h7L3.500 4zM0 5h7L3.500 9z" fill="currentColor" stroke="none" /></Svg>
            </button>
          </div>
          <main className="flex min-w-0 flex-1 justify-center pt-[13px] pr-0.5 pb-[15px]">
            <MainSlide />
          </main>
        </div>
        <div className="h-0.5" />
      </div>
      <ScrollBar label="Thumbnail scroll bar" spacer="h-[115px]" thumb="h-[18px]" className="mt-0.5 mb-0.5 ml-[3px]" />
      <ThumbnailPane />
    </div>
  );
}

function StatusBar() {
  return (
    <footer className="flex h-[21px] shrink-0 items-center border-t border-[#bdbdbd] bg-[#f1f1f1] text-[#555]">
      <span className="w-[95px] pl-[7px]">Slide 16 of 115</span>
      <button aria-label="Spelling" className="mx-[7px] text-[#777]">
        <Svg w={15} h={13}>
          <path d="M6.500 11.500H.5V.5h4l2 1 2-1h4v2M6.500 1.500v10.500l2-1h4V9" />
          <path d="M7.500 6.500l2 2.500 4.500-6" strokeWidth="1.300" />
        </Svg>
      </button>
      <button className="ml-2">English (United States)</button>

      <div className="ml-auto flex h-full items-center">
        <button className="flex items-center gap-1">
          <Svg w={12} h={12}>
            <path d="M0 5.500h12M0 8.500h12M1 11.500h7" />
            <path d="M3 4h6L6 1z" fill="currentColor" stroke="none" />
          </Svg>
          Notes
        </button>
        <button className="ml-5 flex items-center gap-1">
          <Svg w={12} h={12}><path d="M0 0h12v8H6l-3 4V8H0z" fill="#666" stroke="none" /></Svg>
          Comments
        </button>
        <button aria-label="Normal" className="ml-[18px] flex h-full w-[38px] items-center justify-center bg-[#c8c8c8]">
          <Svg w={14} h={13}><path d="M.5 .5h13v12H.5zM3.500 .5v12M6 3.500h5v3H6zM4 9.500h9" /></Svg>
        </button>
        <button aria-label="Slide sorter" className="ml-3"><Svg w={14} h={13}><path d="M.5 .5h5v4h-5zM8.500 .5h5v4h-5zM.5 8.500h5v4h-5zM8.500 8.500h5v4h-5z" /></Svg></button>
        <button aria-label="Reading view" className="ml-6">
          <Svg w={14} h={13}><path d="M7 1.500L5 .5H.5v10H5l2 1.500 2-1.500h4.500V.5H9zM7 1.500V12M2 3h3M2 5h3M2 7h3M2 9h3M9 3h3M9 5h3M9 7h3M9 9h3" /></Svg>
        </button>
        <button aria-label="Slide show" className="ml-6"><Svg w={13} h={12}><path d="M0 1h13" strokeWidth="2" /><path d="M1.500 1v5.500h10V1M6.500 7v4M3.500 11.500h6" /></Svg></button>
        <button aria-label="Zoom out" className="ml-[18px]"><Svg w={7} h={8}><path d="M0 4h7" strokeWidth="2" /></Svg></button>
        <input
          type="range"
          aria-label="Zoom"
          min="10"
          max="146"
          defaultValue="56"
          className="mx-1 h-3 w-[100px] appearance-none bg-[linear-gradient(#aaa,#aaa),linear-gradient(#aaa,#aaa)] bg-[length:100%_1px,1px_5px] bg-center bg-no-repeat [&::-webkit-slider-thumb]:h-[11px] [&::-webkit-slider-thumb]:w-1 [&::-webkit-slider-thumb]:appearance-none [&::-webkit-slider-thumb]:bg-[#666]"
        />
        <button aria-label="Zoom in"><Svg w={8} h={8}><path d="M0 4h8M4 0v8" strokeWidth="2" /></Svg></button>
        <button className="ml-3.5 w-[25px] text-center">73%</button>
        <button aria-label="Fit slide to window" className="mr-1.5 ml-2.5">
          <Svg w={13} h={13}>
            <path d="M.5 .5h12v12H.5z" strokeDasharray="5 2" />
            <path d="M6.500 2v3M6.500 8v3M2 6.500h3M8 6.500h3M5.500 3l1-1 1 1M5.500 10l1 1 1-1M3 5.500l-1 1 1 1M10 5.500l1 1-1 1" />
          </Svg>
        </button>
      </div>
    </footer>
  );
}

export default function App() {
  return (
    <div className={clsx("flex h-screen w-full flex-col overflow-hidden text-[11px] leading-4", UI_FONT)}>
      <Header />
      <Ribbon />
      <Workspace />
      <StatusBar />
    </div>
  );
}
